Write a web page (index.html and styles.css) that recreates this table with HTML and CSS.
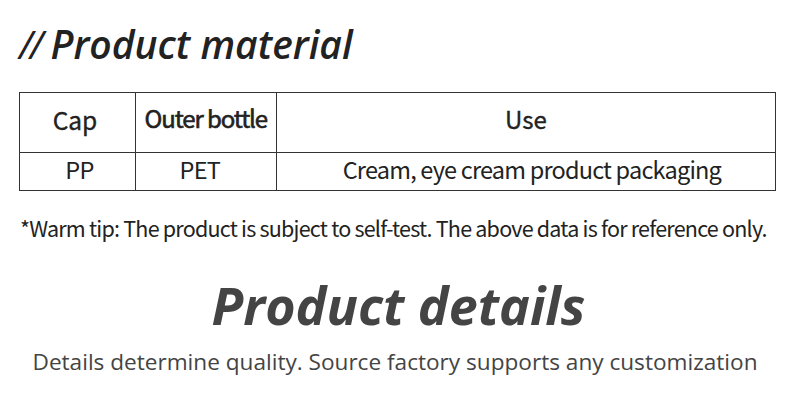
FILE: index.html
```html
<!DOCTYPE html>
<html>
<head>
<meta charset="utf-8">
<link rel="stylesheet" href="styles.css">
</head>
<body>
<div class="page">
  <h1 class="title"><span class="slashes">//</span> Product material</h1>
  <table class="spec">
    <colgroup><col class="c1"><col class="c2"><col class="c3"></colgroup>
    <tr class="head">
      <td class="cap">Cap</td>
      <td class="outer">Outer bottle</td>
      <td class="use">Use</td>
    </tr>
    <tr class="body">
      <td class="pp">PP</td>
      <td class="pet">PET</td>
      <td class="usage">Cream, eye cream product packaging</td>
    </tr>
  </table>
  <p class="tip">*Warm tip: The product is subject to self-test. The above data is for reference only.</p>
  <h2 class="details">Product details</h2>
  <p class="sub">Details determine quality. Source factory supports any customization</p>
</div>
</body>
</html>
```
FILE: styles.css
```css
html, body { margin: 0; padding: 0; background: #fff; }
.page { width: 790px; height: 406px; overflow: hidden; }
.title {
  margin: 0;
  padding: 20px 0 0 19px;
  font-family: "Open Sans", sans-serif;
  font-style: italic;
  font-weight: 600;
  font-size: 39px;
  line-height: 48px;
  color: #222;
}
.slashes { font-weight: 400; letter-spacing: -3px; }
.spec {
  margin: 24px 0 0 19px;
  border-collapse: collapse;
  width: 757px;
  font-family: "Noto Sans CJK SC", "Noto Sans", sans-serif;
  color: #222;
}
.c1 { width: 116px; }
.c2 { width: 141px; }
.c3 { width: 500px; }
.spec td { border: 1px solid #333; padding: 0; text-align: center; vertical-align: middle; }
.head { height: 60px; }
.head td { font-size: 24px; font-weight: 400; line-height: 26px; padding-bottom: 6px; -webkit-text-stroke: 0.35px #222; }
.head .cap { padding-right: 5px; font-size: 24.5px; }
.head .outer { letter-spacing: -1.1px; padding-bottom: 9px; -webkit-text-stroke: 0.6px #222; }
.head .use { padding-bottom: 8px; }
.body { height: 38px; }
.body td { font-size: 23.5px; font-weight: 400; letter-spacing: -0.8px; line-height: 26px; padding-bottom: 5px; }
.body .pp { padding-left: 4px; }
.body .pet { padding-right: 12px; }
.body .usage { padding-left: 12px; }
.tip {
  margin: 23px 0 0 20px;
  font-family: "Noto Sans CJK SC", "Noto Sans", sans-serif;
  font-size: 21.5px;
  line-height: 28px;
  letter-spacing: -0.78px;
  color: #222;
}
.details {
  margin: 31px 0 0 0;
  text-align: center;
  font-family: "Open Sans", sans-serif;
  font-style: italic;
  font-weight: 700;
  font-size: 52px;
  line-height: 64px;
  color: #444;
  padding-left: 7px;
}
.sub {
  margin: 10px 0 0 0;
  text-align: center;
  font-family: "Open Sans", sans-serif;
  font-size: 22.6px;
  line-height: 30px;
  color: #444;
}
```
